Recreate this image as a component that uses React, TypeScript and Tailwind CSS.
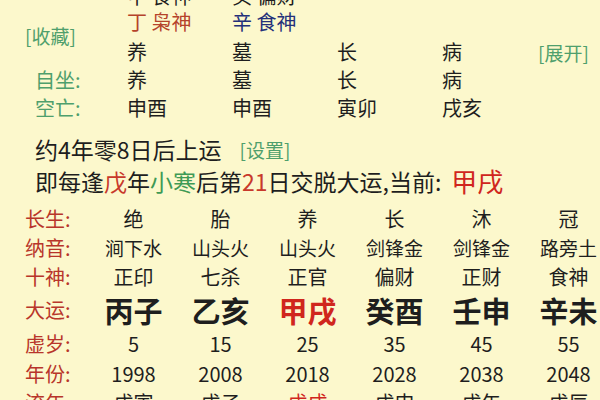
import React from 'react';

const font = "font-['Noto_Sans_CJK_SC','Noto_Sans',sans-serif]";

type Cell = { text: string; red?: boolean };

const topRows: { label?: string; values: string[] }[] = [
  { label: '自坐:', values: ['养', '墓', '长', '病'] },
  { label: '空亡:', values: ['申酉', '申酉', '寅卯', '戌亥'] },
];

const luckRows: { label: string; height: string; cls: string; cells: Cell[] }[] = [
  {
    label: '长生:',
    height: 'h-[29px]',
    cls: 'text-[20px]',
    cells: [{ text: '绝' }, { text: '胎' }, { text: '养' }, { text: '长' }, { text: '沐' }, { text: '冠' }],
  },
  {
    label: '纳音:',
    height: 'h-[29px]',
    cls: 'text-[19px]',
    cells: [{ text: '涧下水' }, { text: '山头火' }, { text: '山头火' }, { text: '剑锋金' }, { text: '剑锋金' }, { text: '路旁土' }],
  },
  {
    label: '十神:',
    height: 'h-[29px]',
    cls: 'text-[20px]',
    cells: [{ text: '正印' }, { text: '七杀' }, { text: '正官' }, { text: '偏财' }, { text: '正财' }, { text: '食神' }],
  },
  {
    label: '大运:',
    height: 'h-[38px]',
    cls: 'text-[29px] font-bold',
    cells: [{ text: '丙子' }, { text: '乙亥' }, { text: '甲戌', red: true }, { text: '癸酉' }, { text: '壬申' }, { text: '辛未' }],
  },
  {
    label: '虚岁:',
    height: 'h-[30px]',
    cls: 'text-[20px]',
    cells: [{ text: '5' }, { text: '15' }, { text: '25' }, { text: '35' }, { text: '45' }, { text: '55' }],
  },
  {
    label: '年份:',
    height: 'h-[29px]',
    cls: 'text-[20px]',
    cells: [{ text: '1998' }, { text: '2008' }, { text: '2018' }, { text: '2028' }, { text: '2038' }, { text: '2048' }],
  },
  {
    label: '流年:',
    height: 'h-[29px]',
    cls: 'text-[20px]',
    cells: [{ text: '戊寅' }, { text: '戊子' }, { text: '戊戌', red: true }, { text: '戊申' }, { text: '戊午' }, { text: '戊辰' }],
  },
];

export default function App() {
  return (
    <div className={`w-[600px] h-[400px] overflow-hidden bg-[#fcf8cc] text-[#1e1e1e] leading-none ${font}`}>
      {/* top: pillars */}
      <div className="-mt-[14px] grid grid-cols-[127px_105px_105px_105px_96px_1fr] grid-rows-[20px_32px_28px_28px_28px] text-[20px]">
        <div />
        <div className="flex items-center">甲 食神</div>
        <div className="flex items-center">癸 偏财</div>
        <div className="col-span-3" />

        <div className="row-span-2 flex items-center pl-[25px] pb-[2px] text-[19px] text-[#4f9f6c]">[收藏]</div>
        <div className="flex items-center text-[#b5432b]">丁 枭神</div>
        <div className="flex items-center text-[#24307a]">辛 食神</div>
        <div className="col-span-3" />

        <div className="flex items-center">养</div>
        <div className="flex items-center">墓</div>
        <div className="flex items-center">长</div>
        <div className="flex items-center">病</div>
        <div className="flex items-center text-[19px] text-[#4f9f6c]">[展开]</div>

        {topRows.map(row => (
          <React.Fragment key={row.label}>
            <div className="flex items-center pl-[35px] text-[#4f9f6c]">{row.label}</div>
            {row.values.map((v, i) => (
              <div key={i} className="flex items-center">{v}</div>
            ))}
            <div />
          </React.Fragment>
        ))}
      </div>

      {/* start of luck */}
      <div className="mt-[10px] h-[34px] flex items-center pl-[35px] text-[23px]">
        约4年零8日后上运
        <span className="ml-[18px] text-[19px] text-[#4f9f6c]">[设置]</span>
      </div>
      <div className="h-[30px] flex items-center pl-[35px] text-[23px] whitespace-nowrap">
        即每逢<span className="text-[#c8392b]">戊</span>年<span className="text-[#3f9a55]">小寒</span>后第
        <span className="text-[#c8392b]">21</span>日交脱大运,当前:
        <span className="ml-[10px] text-[26px] text-[#d0261d]">甲戌</span>
      </div>

      {/* luck table */}
      <div className="mt-[8px] w-[612px]">
        {luckRows.map(row => (
          <div key={row.label} className={`flex ${row.height}`}>
            <div className="w-[90px] shrink-0 flex items-center pl-[25px] text-[20px] text-[#b8352a]">{row.label}</div>
            {row.cells.map((c, i) => (
              <div
                key={i}
                className={`w-[87px] shrink-0 flex items-center justify-center whitespace-nowrap ${row.cls} ${c.red ? 'text-[#d0261d]' : ''}`}
              >
                {c.text}
              </div>
            ))}
          </div>
        ))}
      </div>
    </div>
  );
}
